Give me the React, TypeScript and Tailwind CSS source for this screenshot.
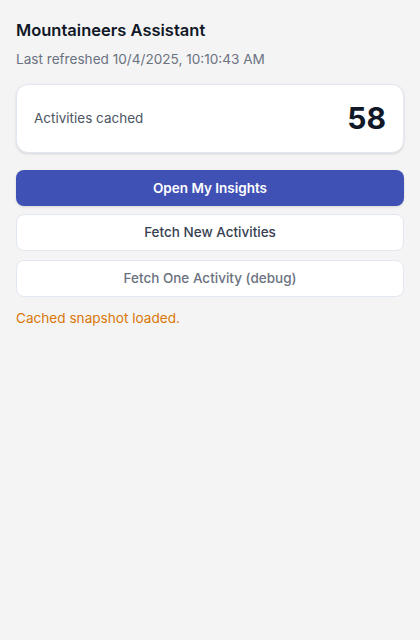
import React from "react";

export default function App() {
  return (
    <div className="min-h-[640px] bg-[#f4f4f5] p-4" style={{ fontFamily: "Inter, 'Noto Sans', sans-serif" }}>
      <h1 className="text-[16.5px] font-semibold text-[#111827] mt-[2px] leading-6">Mountaineers Assistant</h1>
      <p className="text-[13.6px] text-[#6b7280] mt-[7px] leading-5">Last refreshed 10/4/2025, 10:10:43 AM</p>
      <div className="mt-[15px] flex h-[69px] items-center justify-between rounded-xl border border-[#e2e8f0] bg-white px-[17px] shadow-sm">
        <span className="text-[13.5px] text-[#4b5563]">Activities cached</span>
        <span className="text-[30px] font-bold text-[#111827]">58</span>
      </div>
      <div className="mt-[17px] flex flex-col">
        <button className="h-9 rounded-lg bg-[#3f51b5] text-[13.5px] font-semibold text-white shadow-sm">Open My Insights</button>
        <button className="mt-2 h-[37px] rounded-lg border border-[#e2e8f0] bg-white text-[13.5px] font-medium text-[#374151]">Fetch New Activities</button>
        <button className="mt-[9px] h-[37px] rounded-lg border border-[#e2e8f0] bg-white text-[13.5px] font-medium text-[#6b7280]">Fetch One Activity (debug)</button>
      </div>
      <p className="mt-[11px] text-[13.6px] text-[#d97706]">Cached snapshot loaded.</p>
    </div>
  );
}
